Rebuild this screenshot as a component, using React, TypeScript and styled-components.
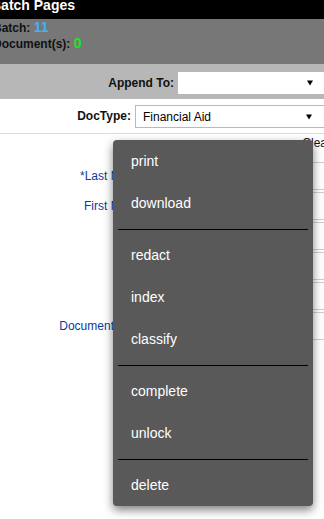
import React from "react";
import styled, { createGlobalStyle } from "styled-components";

const Global = createGlobalStyle`
  html, body { margin: 0; padding: 0; background: #fff; overflow: hidden; }
  body { font-family: "Liberation Sans", Arial, sans-serif; }
`;

const Viewport = styled.div`
  position: relative;
  width: 324px;
  height: 519px;
  overflow: hidden;
`;

const Page = styled.div`
  width: 345px;
  margin-left: -9px;
`;

const Header = styled.div`
  height: 19px;
  background: #000;
  color: #fff;
  font-weight: bold;
  font-size: 14px;
  line-height: 11px;
`;

const Info = styled.div`
  background: #777777;
  padding: 1px 0 12px 2px;
  font-weight: bold;
  font-size: 12px;
  line-height: 16px;
  color: #111;
`;

const InfoLine = styled.div`
  height: 16px;
`;

const Count = styled.span<{ $color: string }>`
  color: ${(p) => p.$color};
  font-size: 14px;
  line-height: 12px;
`;

const AppendBar = styled.div`
  background: #b7b7b7;
  height: 35px;
  box-sizing: border-box;
  padding-top: 8px;
  display: flex;
  justify-content: flex-end;
  align-items: flex-start;
`;

const DocRow = styled.div`
  padding: 6px 0 5px;
  border-bottom: 1px solid #dcdcdc;
  display: flex;
  justify-content: flex-end;
  align-items: center;
`;

const FieldLabel = styled.span<{ $h: number }>`
  font-size: 12px;
  font-weight: bold;
  color: #111;
  line-height: ${(p) => p.$h}px;
  margin-right: 4px;
`;

const SelectBox = styled.div<{ $w: number; $h: number; $border: boolean }>`
  width: ${(p) => p.$w}px;
  height: ${(p) => p.$h}px;
  box-sizing: border-box;
  background: #fff;
  border: ${(p) => (p.$border ? "1px solid #b9b9b9" : "none")};
  padding: 0 23px 0 7px;
  display: flex;
  align-items: center;
  justify-content: space-between;
  font-size: 12px;
  color: #000;
`;

const Arrow = () => (
  <svg width="6" height="6" viewBox="0 0 6 6" aria-hidden="true">
    <polygon points="0,0.5 6,0.5 3,5.5" fill="#000" />
  </svg>
);

const ClearRow = styled.div`
  height: 28px;
  box-sizing: border-box;
  padding: 1px 5px 0 0;
  text-align: right;
  font-size: 12px;
  line-height: 16px;
  color: #111;
`;

const Form = styled.div`
  display: grid;
  grid-template-columns: 155px 1fr;
  column-gap: 6px;
  row-gap: 2px;
`;

const FormLabel = styled.label`
  font-size: 12px;
  color: #0d3a9e;
  text-align: right;
  align-self: center;
  line-height: 14px;
`;

const Input = styled.div`
  height: 28px;
  box-sizing: border-box;
  border: 1px solid #cfcfcf;
  background: #fff;
`;

const Menu = styled.div`
  position: absolute;
  left: 113px;
  top: 140px;
  width: 200px;
  background: #595959;
  border-radius: 4px;
  box-shadow: 0 4px 10px rgba(0, 0, 0, 0.5);
`;

const MenuItem = styled.div`
  padding: 13px 18px;
  font-size: 14px;
  line-height: 16px;
  color: #fff;
`;

const Separator = styled.div`
  height: 1px;
  background: #000;
  margin: 5px 5px 4px;
`;

const fields = ["*Last Name:", "First Name:", "MI:", "SSN:", "DOB:", "Document Date:"];

const groups = [["print", "download"], ["redact", "index", "classify"], ["complete", "unlock"], ["delete"]];

export default function App() {
  return (
    <Viewport>
      <Global />
      <Page>
        <Header>Batch Pages</Header>
        <Info>
          <InfoLine>
            Batch: <Count $color="#3fb4f2">11</Count>
          </InfoLine>
          <InfoLine>
            Document(s): <Count $color="#1fe61f">0</Count>
          </InfoLine>
        </Info>
        <AppendBar>
          <FieldLabel $h={22}>Append To:</FieldLabel>
          <SelectBox $w={158} $h={22} $border={false}>
            <span />
            <Arrow />
          </SelectBox>
        </AppendBar>
        <DocRow>
          <FieldLabel $h={23}>DocType:</FieldLabel>
          <SelectBox $w={201} $h={23} $border={true}>
            <span>Financial Aid</span>
            <Arrow />
          </SelectBox>
        </DocRow>
        <ClearRow>Clear</ClearRow>
        <Form>
          {fields.map((f) => (
            <React.Fragment key={f}>
              <FormLabel>{f}</FormLabel>
              <Input />
            </React.Fragment>
          ))}
        </Form>
      </Page>
      <Menu>
        {groups.map((g, i) => (
          <React.Fragment key={i}>
            {i > 0 && <Separator />}
            {g.map((item) => (
              <MenuItem key={item}>{item}</MenuItem>
            ))}
          </React.Fragment>
        ))}
      </Menu>
    </Viewport>
  );
}
